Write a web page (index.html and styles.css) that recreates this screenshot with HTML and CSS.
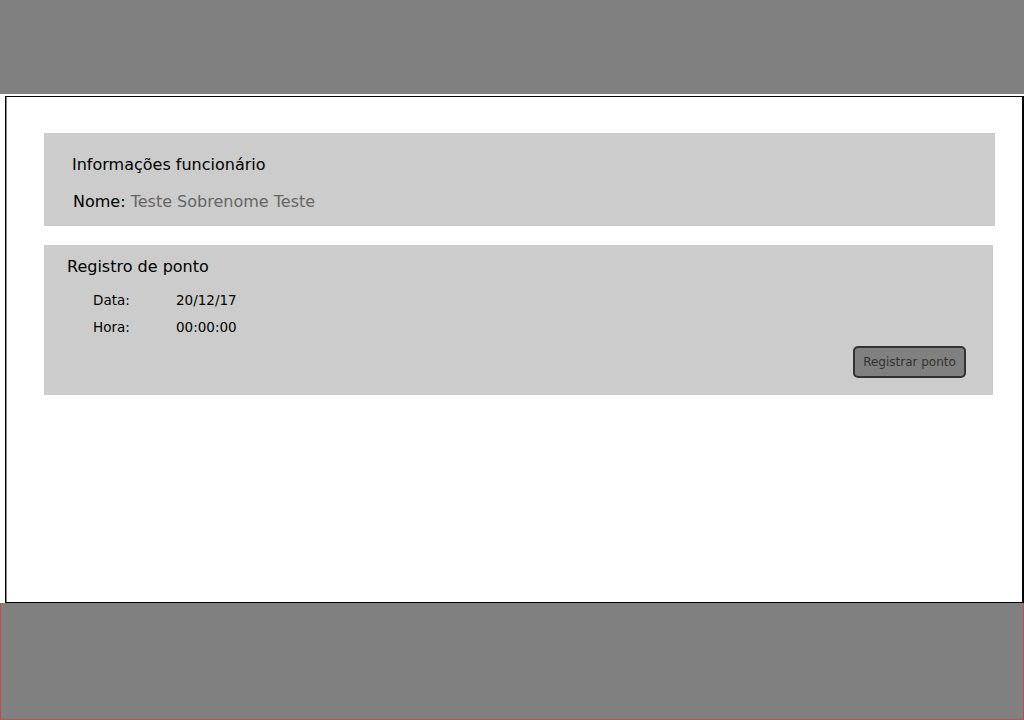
FILE: index.html
```html
<!DOCTYPE html>
<html lang="pt">
<head>
<meta charset="utf-8">
<link rel="stylesheet" href="styles.css">
</head>
<body>
<div class="page">
  <header class="top-bar"></header>
  <main class="content">
    <section class="panel panel-info">
      <div class="panel-title">Informações funcionário</div>
      <div class="name-line"><span class="label">Nome:</span> <span class="value">Teste Sobrenome Teste</span></div>
    </section>
    <section class="panel panel-ponto">
      <div class="panel-title">Registro de ponto</div>
      <div class="fields">
        <span class="field-label">Data:</span><span class="field-value">20/12/17</span>
        <span class="field-label">Hora:</span><span class="field-value">00:00:00</span>
      </div>
      <div class="actions">
        <button class="btn">Registrar ponto</button>
      </div>
    </section>
  </main>
  <footer class="bottom-bar"></footer>
</div>
</body>
</html>
```
FILE: styles.css
```css
html, body {
  margin: 0;
  padding: 0;
  background: #ffffff;
  font-family: "DejaVu Sans", sans-serif;
}
.page {
  width: 1024px;
  height: 720px;
  display: flex;
  flex-direction: column;
  overflow: hidden;
}
.top-bar {
  height: 94px;
  background: #808080;
  flex: none;
}
.content {
  margin-top: 2px;
  margin-left: 5px;
  width: 1019px;
  height: 507px;
  box-sizing: border-box;
  border: 1px solid #000000;
  border-right-width: 2px;
  box-shadow: inset 1px 0 0 #888888;
  background: #ffffff;
  flex: none;
  padding: 36px 0 0 38px;
  display: flex;
  flex-direction: column;
}
.panel {
  background: #cccccc;
  box-sizing: border-box;
}
.panel-info {
  width: 951px;
  height: 93px;
  padding: 22px 0 0 28px;
}
.panel-title {
  font-size: 16px;
  line-height: 20px;
  color: #000000;
}
.name-line {
  margin-top: 17px;
  margin-left: 1px;
  font-size: 16px;
  line-height: 20px;
}
.name-line .label { color: #000000; }
.name-line .value { color: #666666; }
.panel-ponto {
  margin-top: 19px;
  width: 949px;
  height: 150px;
  padding: 12px 27px 0 23px;
  display: flex;
  flex-direction: column;
}
.fields {
  margin-top: 15px;
  margin-left: 26px;
  display: grid;
  grid-template-columns: 83px auto;
  row-gap: 11px;
  font-size: 13.5px;
  line-height: 16px;
  color: #000000;
}
.actions {
  margin-top: 11px;
  display: flex;
  justify-content: flex-end;
}
.btn {
  width: 113px;
  height: 32px;
  background: #808080;
  border: 2px solid #333333;
  border-radius: 5px;
  font-family: "DejaVu Sans", sans-serif;
  font-size: 12px;
  color: #333333;
  padding: 0;
  box-sizing: border-box;
}
.bottom-bar {
  flex: none;
  height: 117px;
  background: #808080;
  border: 1px solid #b85450;
  border-top: none;
  box-sizing: border-box;
}
```
